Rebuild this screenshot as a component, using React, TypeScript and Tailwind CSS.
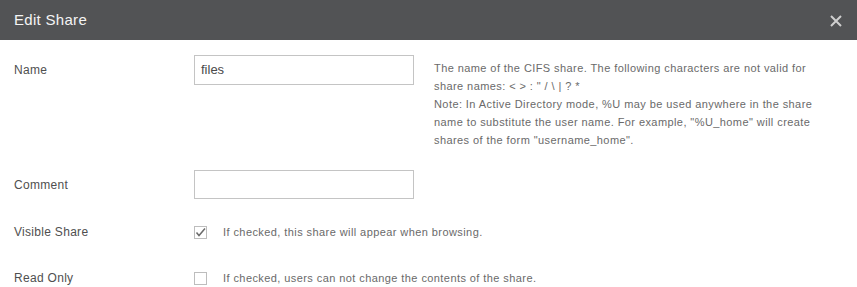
const helpLines = [
  "The name of the CIFS share. The following characters are not valid for",
  'share names: < > : " / \\ | ? *',
  "Note: In Active Directory mode, %U may be used anywhere in the share",
  'name to substitute the user name. For example, "%U_home" will create',
  'shares of the form "username_home".',
];

function Checkbox({ checked }: { checked: boolean }) {
  return (
    <div className="w-[13px] h-[13px] border border-[#bdbdbd] bg-white flex items-center justify-center shrink-0">
      {checked && (
        <svg width="11" height="11" viewBox="0 0 11 11">
          <path d="M1.5 5.5 L4 8.5 L10 1.5" fill="none" stroke="#6b6b6b" strokeWidth="1.5" />
        </svg>
      )}
    </div>
  );
}

export default function App() {
  return (
    <div
      className="w-[857px] h-[287px] bg-white overflow-hidden"
      style={{ fontFamily: '"Liberation Sans", Arial, sans-serif' }}
    >
      {/* Header */}
      <div className="h-[40px] bg-[#525355] flex items-center justify-between pl-[14px] pr-[15px]">
        <span className="text-[15px] text-[#f4f4f4] tracking-[0.3px]">Edit Share</span>
        <svg width="12" height="12" viewBox="0 0 12 12" className="mt-[2px]">
          <path d="M1 1 L11 11 M11 1 L1 11" stroke="#cfcfcf" strokeWidth="2" />
        </svg>
      </div>

      <div className="px-[14px] text-[12px] text-[#4f4f4f] tracking-[0.3px]">
        {/* Name */}
        <div className="flex items-start mt-[15px]">
          <div className="w-[180px] h-[30px] flex items-center">Name</div>
          <div className="w-[220px] h-[30px] border border-[#c4c4c4] flex items-center px-[6px] text-[13px] tracking-normal text-[#4a4a4a]">
            files
          </div>
          <div className="ml-[20px] pt-[4px] text-[11px] leading-[18px] text-[#6a6a6a] tracking-[0.42px]">
            {helpLines.map((l) => (
              <div key={l} className="whitespace-nowrap">
                {l}
              </div>
            ))}
          </div>
        </div>

        {/* Comment */}
        <div className="flex items-center mt-[21px]">
          <div className="w-[180px] h-[28px] flex items-center">Comment</div>
          <div className="w-[220px] h-[29px] border border-[#c4c4c4]" />
        </div>

        {/* Visible Share */}
        <div className="flex items-center mt-[23px] h-[20px]">
          <div className="w-[180px]">Visible Share</div>
          <Checkbox checked />
          <span className="ml-[16px] text-[11px] text-[#6a6a6a] tracking-[0.42px]">
            If checked, this share will appear when browsing.
          </span>
        </div>

        {/* Read Only */}
        <div className="flex items-center mt-[26px] h-[20px]">
          <div className="w-[180px]">Read Only</div>
          <Checkbox checked={false} />
          <span className="ml-[16px] text-[11px] text-[#6a6a6a] tracking-[0.42px]">
            If checked, users can not change the contents of the share.
          </span>
        </div>
      </div>
    </div>
  );
}
